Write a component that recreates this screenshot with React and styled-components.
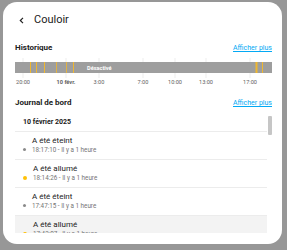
import React from "react";
import styled, { createGlobalStyle } from "styled-components";

const Global = createGlobalStyle`
  html, body { margin: 0; padding: 0; }
  body { font-family: Roboto, "Noto Sans", Arial, sans-serif; background: #979797; }
  * { box-sizing: border-box; }
`;

const Page = styled.div`
  width: 287px;
  height: 250px;
  padding: 2px 5px 6px 3px;
  background: #979797;
`;

const Dialog = styled.div`
  height: 100%;
  background: #fff;
  border-radius: 14px;
  padding: 8px 10px 0 12px;
  display: flex;
  flex-direction: column;
  overflow: hidden;
`;

const Header = styled.div`
  height: 20px;
  display: flex;
  align-items: center;
  gap: 9px;
  padding-left: 4px;
`;

const Title = styled.h1`
  margin: 0;
  font-size: 11px;
  font-weight: 400;
  color: #212121;
  line-height: 20px;
`;

const SectionHeader = styled.div`
  height: 14px;
  margin-top: ${(p) => p.$top}px;
  display: flex;
  align-items: center;
  justify-content: space-between;
`;

const SectionTitle = styled.h2`
  margin: 0;
  font-size: 8px;
  font-weight: 700;
  color: #212121;
`;

const Link = styled.a`
  font-size: 7px;
  color: #03a9f4;
  text-decoration: underline;
  margin-top: 2px;
`;

const Chart = styled.svg`
  display: block;
  margin-top: 3px;
  width: 257px;
  height: 30px;
`;

const LogList = styled.div`
  position: relative;
  margin-top: 4px;
  height: 120px;
  overflow: hidden;
  padding-right: 5px;
`;

const DateHeader = styled.div`
  height: 19px;
  padding-left: 8px;
  display: flex;
  align-items: center;
  font-size: 7px;
  font-weight: 700;
  color: #212121;
  border-bottom: 1px solid #ececec;
`;

const LogItem = styled.div`
  height: 28px;
  display: flex;
  align-items: center;
  gap: 6px;
  padding-left: 8px;
  border-bottom: 1px solid #ececec;
  background: ${(p) => (p.$highlighted ? "#f3f3f3" : "transparent")};
`;

const Dot = styled.span`
  flex: none;
  width: ${(p) => (p.$on ? 4 : 3)}px;
  height: ${(p) => (p.$on ? 4 : 3)}px;
  border-radius: 50%;
  margin-top: 8px;
  background: ${(p) => (p.$on ? "#ffc107" : "#8a8a8a")};
`;

const ItemText = styled.div`
  display: flex;
  flex-direction: column;
`;

const ItemTitle = styled.span`
  font-size: 8px;
  line-height: 10px;
  color: #212121;
`;

const ItemSub = styled.span`
  font-size: 6.3px;
  line-height: 9px;
  color: #757575;
`;

const ScrollThumb = styled.div`
  position: absolute;
  right: 0;
  top: 3px;
  width: 4px;
  height: 19px;
  border-radius: 1px;
  background: #c6c6c6;
`;

const yellowLines = [
  [15, 1],
  [21, 1],
  [29, 1],
  [41, 0.8],
  [51, 0.8],
  [58, 1],
  [240.5, 2],
  [247, 1],
];

const ticks = [
  { x: 8, label: "20:00" },
  { x: 51, label: "10 févr.", bold: true },
  { x: 84, label: "3:00" },
  { x: 128, label: "7:00" },
  { x: 160, label: "10:00" },
  { x: 191, label: "13:00" },
  { x: 235, label: "17:00" },
];

const items = [
  { title: "A été éteint", sub: "18:17:10 - Il y a 1 heure", on: false },
  { title: "A été allumé", sub: "18:14:26 - Il y a 1 heure", on: true },
  { title: "A été éteint", sub: "17:47:15 - Il y a 1 heure", on: false },
  { title: "A été allumé", sub: "17:42:07 - Il y a 1 heure", on: true, hl: true },
];

export default function App() {
  return (
    <Page>
      <Global />
      <Dialog>
        <Header>
          <svg width="6" height="7" viewBox="0 0 6 7">
            <polyline points="4,0.8 1.3,3.5 4,6.2" fill="none" stroke="#212121" strokeWidth="1.2" />
          </svg>
          <Title>Couloir</Title>
        </Header>
        <SectionHeader $top={10}>
          <SectionTitle>Historique</SectionTitle>
          <Link>Afficher plus</Link>
        </SectionHeader>
        <Chart viewBox="0 0 257 30">
          {ticks.map((t) => (
            <line key={t.label} x1={t.x} x2={t.x} y1="1" y2="21" stroke="#e0e0e0" strokeWidth="0.6" />
          ))}
          <rect x="0" y="5" width="257" height="11" fill="#9e9e9e" />
          {yellowLines.map(([x, w]) => (
            <rect key={x} x={x} y="5" width={w} height="11" fill="#f0b72f" />
          ))}
          <text x="72" y="12.6" fontSize="5.6" fontWeight="700" fill="#fff" fontFamily="Roboto">
            Désactivé
          </text>
          {ticks.map((t) => (
            <text
              key={t.label + "l"}
              x={t.x}
              y="27"
              fontSize="5.6"
              fontWeight={t.bold ? 700 : 400}
              fill="#616161"
              textAnchor="middle"
              fontFamily="Roboto"
            >
              {t.label}
            </text>
          ))}
        </Chart>
        <SectionHeader $top={8}>
          <SectionTitle>Journal de bord</SectionTitle>
          <Link>Afficher plus</Link>
        </SectionHeader>
        <LogList>
          <DateHeader>10 février 2025</DateHeader>
          {items.map((it, i) => (
            <LogItem key={i} $highlighted={it.hl}>
              <Dot $on={it.on} />
              <ItemText>
                <ItemTitle>{it.title}</ItemTitle>
                <ItemSub>{it.sub}</ItemSub>
              </ItemText>
            </LogItem>
          ))}
          <ScrollThumb />
        </LogList>
      </Dialog>
    </Page>
  );
}
